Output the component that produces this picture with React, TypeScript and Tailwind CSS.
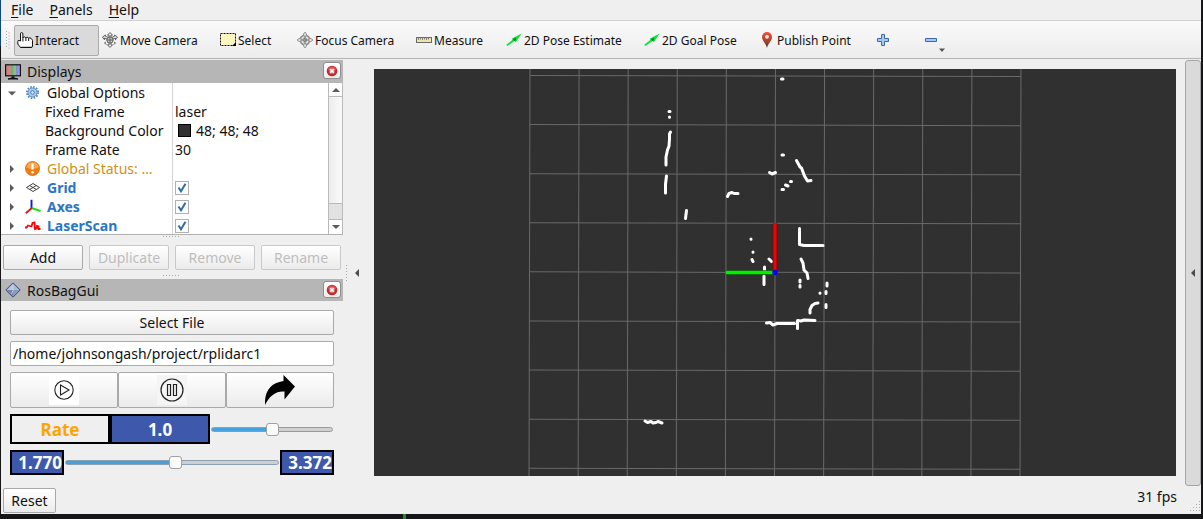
import React, { useState } from "react";

const HandIcon = () => (
  <svg viewBox="0 0 16 16" className="size-4 shrink-0">
    <path d="M3.500 9V1.800q0-1.200 1.200-1.200t1.200 1.200V6q.2-1 1.500-1t1.500 1q.2-.7 1.400-.7t1.400 1q.2-.6 1.400-.4t1.400 1.300q1 .1 1 1.300V14q0 1.500-1.500 1.500H3.500L.800 12V9.200q.2-1 1.200-.8z" fill="#fff" stroke="#111" />
    <path d="M5.900 6v3.500M8.900 6v3M11.700 6.300v2.700" stroke="#111" fill="none" />
    <path d="M3.500 15.300h11" stroke="#111" />
  </svg>
);

const MoveIcon = () => (
  <svg viewBox="0 0 16 16" className="size-4 shrink-0" fill="none" stroke="#555" strokeWidth="0.900">
    <path d="M8 .6 10.500 3H9v2.500h-2V3H5.500zM8 15.400 10.500 13H9v-2.500h-2V13H5.500zM.5 5 3.500 3v1.300l3 1.200-1 1.700-3-1.200V7.800zM15.500 5l-3-2v1.300l-3 1.200 1 1.700 3-1.200V7.800z" fill="#eee" />
    <circle cx="8" cy="8" r="3.200" fill="#ccc" />
    <path d="M8 4.800v6.400M4.800 8h6.400M4 10l-1.500 1 2 1.500M12 10l1.500 1-2 1.500" />
  </svg>
);

const SelectIcon = () => (
  <svg viewBox="0 0 16 14" className="h-3.5 w-4 shrink-0">
    <rect x=".5" y=".5" width="15" height="12" fill="#fdf6c0" stroke="#111" strokeDasharray="2 1" />
    <path d="M16 9v4h-4z" fill="#000" />
  </svg>
);

const FocusIcon = () => (
  <svg viewBox="0 0 16 16" className="size-4 shrink-0" fill="none" stroke="#888">
    <circle cx="8" cy="8" r="4.700" fill="#ddd" strokeWidth="1.600" />
    <circle cx="8" cy="8" r="1.800" />
    <path d="M8 4v8M4 8h8" stroke="#777" />
    <path d="M8 0 9.500 2v2h-3V2zM8 16l1.500-2v-2h-3v2zM0 8l2-1.500h2v3H2zM16 8l-2-1.500h-2v3h2z" fill="#ddd" strokeWidth="0.800" />
  </svg>
);

const MeasureIcon = () => (
  <svg viewBox="0 0 16 6" className="h-1.5 w-4 shrink-0">
    <rect x=".5" y=".5" width="15" height="5" fill="#efe3b0" stroke="#6a6a6a" />
    <path d="M2.500 1v2M4.500 1v1.500M6.500 1v2M8.500 1v1.500M10.500 1v2M12.500 1v1.500" stroke="#555" strokeWidth=".7" />
  </svg>
);

const PoseIcon = () => (
  <svg viewBox="0 0 16 14" className="h-3.5 w-4 shrink-0">
    <path d="M.3 11.800 6.600 6.800 5.600 5.700 15.600.5 9.800 9.200 8.600 8 1.300 13z" fill="#0be53a" />
    <path d="M6.800 6.800 9.600 4.600l.6 2.200L8.800 8z" fill="#087c2a" />
  </svg>
);

const PinIcon = () => (
  <svg viewBox="0 0 16 16" className="size-4 shrink-0">
    <defs>
      <linearGradient id="pin" x1="0" y1="0" x2="0" y2="1">
        <stop offset="0" stopColor="#e8533a" />
        <stop offset=".6" stopColor="#a8402a" />
        <stop offset="1" stopColor="#333" />
      </linearGradient>
    </defs>
    <path d="M8 0a5 5 0 0 1 5 5c0 4-4 6-5 11C7 11 3 9 3 5a5 5 0 0 1 5-5z" fill="url(#pin)" />
    <circle cx="8" cy="4.800" r="1.900" fill="#fbe9e4" />
  </svg>
);

const PlusIcon = () => (
  <svg viewBox="0 0 12 12" className="size-3">
    <path d="M4.500.5h3v4h4v3h-4v4h-3v-4h-4v-3h4z" fill="#a9c6e8" stroke="#3a6cab" />
  </svg>
);

const MinusIcon = () => (
  <svg viewBox="0 0 12 4" className="h-1 w-3">
    <path d="M.5.5h11v3H.5z" fill="#a9c6e8" stroke="#3a6cab" />
  </svg>
);

const tools = [
  { label: "Interact", icon: <HandIcon />, width: "w-[85px]" },
  { label: "Move Camera", icon: <MoveIcon />, width: "w-[118px]" },
  { label: "Select", icon: <SelectIcon />, width: "w-[77px]" },
  { label: "Focus Camera", icon: <FocusIcon />, width: "w-[119px]" },
  { label: "Measure", icon: <MeasureIcon />, width: "w-[90px]" },
  { label: "2D Pose Estimate", icon: <PoseIcon />, width: "w-[138px]" },
  { label: "2D Goal Pose", icon: <PoseIcon />, width: "w-[115px]" },
  { label: "Publish Point", icon: <PinIcon />, width: "w-[114px]" },
];

function Toolbar() {
  const [active, setActive] = useState("Interact");
  return (
    <div className="flex h-[38px] shrink-0 items-center border-b border-[#b4b4b4] bg-linear-to-b from-[#fafafa] to-[#ececec] pt-px pl-1 text-[12px]">
      <svg viewBox="0 0 5 18" className="mr-1 h-[18px] w-[5px]">
        <path d="M1.500 0v18M4 1.500v16" stroke="#aaa" strokeDasharray="1 2" />
      </svg>
      {tools.map((t) => {
        const on = t.label === active;
        return (
          <button
            key={t.label}
            onClick={() => setActive(t.label)}
            className={`flex h-[31px] shrink-0 items-center gap-0.5 rounded-xs border pl-0.5 whitespace-nowrap ${t.width} ${on ? "border-[#ababab] bg-[#dadada]" : "border-transparent"}`}
          >
            {t.icon}
            {t.label}
          </button>
        );
      })}
      <button aria-label="Add tool" className="ml-[5px] flex w-4 justify-center"><PlusIcon /></button>
      <button aria-label="Remove tool" className="relative ml-8 flex h-6 w-4 items-center justify-center">
        <MinusIcon />
        <svg viewBox="0 0 6 4" className="absolute -right-1.5 bottom-0 h-1 w-1.5"><path d="M0 .5h6L3 4z" fill="#555" /></svg>
      </button>
    </div>
  );
}

const MonitorIcon = () => (
  <svg viewBox="0 0 16 16" className="size-4">
    <defs>
      <linearGradient id="screen">
        <stop offset="0" stopColor="#d87878" />
        <stop offset=".3" stopColor="#c88a8a" />
        <stop offset=".45" stopColor="#6fae6f" />
        <stop offset=".65" stopColor="#93c393" />
        <stop offset=".75" stopColor="#8585cf" />
        <stop offset="1" stopColor="#a9a9ee" />
      </linearGradient>
    </defs>
    <rect x=".6" y=".8" width="14.800" height="11" fill="url(#screen)" stroke="#111" strokeWidth="1.200" />
    <path d="M6.500 12h3v2h-3z" fill="#333" />
    <path d="M3 15q5-2.500 10 0z" fill="#111" stroke="#111" />
  </svg>
);

const DiamondIcon = () => (
  <svg viewBox="0 0 16 16" className="size-4">
    <path d="M8 .8 15.200 8 8 15.200.8 8z" fill="#8a9cc0" stroke="#454f78" />
    <path d="M8 1.800 14 8 8 8z" fill="#a9b9d6" />
    <path d="M8 1.800V8L2 8z" fill="#b9c7df" />
    <path d="M2 8l6 6V8z" fill="#7084ae" />
    <path d="M8 3.500v5L6.500 12" stroke="#dbe3f0" strokeWidth=".7" fill="none" />
  </svg>
);

function DockTitle({ title, icon, height }: { title: string; icon: React.ReactNode; height: string }) {
  return (
    <div className={`flex shrink-0 items-center gap-1.5 bg-[#b6b6b6] pr-0.5 pl-1 ${height}`}>
      {icon}
      <h2 className="flex-1">{title}</h2>
      <button aria-label={`Close ${title}`} className="mt-[2px] flex h-[17px] w-[18px] items-center justify-center self-start rounded-[3px] border border-[#8f8f8f] bg-linear-to-b from-white to-[#eee]">
        <svg viewBox="0 0 12 12" className="size-3">
          <circle cx="6" cy="6" r="5.300" fill="#c8282c" />
          <path d="M1.500 5a4.600 4.600 0 0 1 9 0z" fill="#d8484c" />
          <rect x="3.500" y="3.500" width="5" height="5" rx="1" fill="#eaa5a6" />
          <path d="m4.300 4.300 3.400 3.400M7.700 4.300 4.300 7.700" stroke="#fff" strokeWidth="1.200" />
        </svg>
      </button>
    </div>
  );
}

const GearIcon = () => (
  <svg viewBox="0 0 16 16" className="size-4">
    <circle cx="7.500" cy="7.500" r="5.600" fill="none" stroke="#4a7fc0" strokeWidth="1.800" strokeDasharray="1.500 1.430" />
    <circle cx="7.500" cy="7.500" r="4.500" fill="#a9c8ea" stroke="#5f8fcb" />
    <circle cx="7.500" cy="7.500" r="1.800" fill="#d9e8f7" stroke="#4a7fc0" />
  </svg>
);

const WarnIcon = () => (
  <svg viewBox="0 0 16 16" className="size-4">
    <circle cx="7.500" cy="7.500" r="7" fill="#f07d12" stroke="#c9630a" strokeWidth=".8" />
    <path d="M1.200 6.500a6.400 6.400 0 0 1 12.600 0q-6.300 2.500-12.600 0z" fill="#f9a64e" />
    <path d="M7.500 2.500v6" stroke="#fff" strokeWidth="2.200" />
    <circle cx="7.500" cy="11.200" r="1.300" fill="#fff" />
  </svg>
);

const GridIcon = () => (
  <svg viewBox="0 0 16 16" className="size-4" fill="none" stroke="#444">
    <path d="M8 3.500 14.500 7.500 8 11.500 1.500 7.500zM4.700 5.500l6.600 4M11.300 5.500l-6.600 4" />
  </svg>
);

const AxesIcon = () => (
  <svg viewBox="0 0 16 16" className="size-4" fill="none" strokeWidth="1.900">
    <path d="M6.500 9.500V.8" stroke="#1414e6" />
    <path d="M6.500 9 15.500 12" stroke="#14e614" />
    <path d="M6.800 9 .8 14.200" stroke="#e61414" />
  </svg>
);

const ScanIcon = () => (
  <svg viewBox="0 0 16 16" className="size-4" fill="none" stroke="#f40808" strokeWidth="1.800">
    <path d="M0 9.500h1.500L3 7.500l3.500 1L7.500 5l2-.5.500 6.500 1.500-.5.500-2.500 1.500.5V11h2" />
  </svg>
);

type Row = { name: string; icon?: React.ReactNode; arrow?: "open" | "closed"; value?: React.ReactNode; style?: string; check?: boolean };

const rows: Row[] = [
  { name: "Global Options", icon: <GearIcon />, arrow: "open" },
  { name: "Fixed Frame", value: "laser" },
  {
    name: "Background Color",
    value: (
      <>
        <span className="mr-[5px] ml-[3px] inline-block size-[13px] border border-black bg-[#303030]" />
        48; 48; 48
      </>
    ),
  },
  { name: "Frame Rate", value: "30" },
  { name: "Global Status: …", icon: <WarnIcon />, arrow: "closed", style: "text-[#cf9018]" },
  { name: "Grid", icon: <GridIcon />, arrow: "closed", style: "font-bold text-[#2a76c6]", check: true },
  { name: "Axes", icon: <AxesIcon />, arrow: "closed", style: "font-bold text-[#2a76c6]", check: true },
  { name: "LaserScan", icon: <ScanIcon />, arrow: "closed", style: "font-bold text-[#2a76c6]", check: true },
];

function TreeRow({ row }: { row: Row }) {
  return (
    <div role="treeitem" className="grid h-[19px] grid-cols-[172px_1fr]">
      <div className="flex items-center border-r border-[#d4d4d4] pl-[7px]">
        {row.arrow && (
          <svg viewBox="0 0 8 8" className="mr-[9px] size-2">
            <path d={row.arrow === "open" ? "M0 2.500h8L4 6.500z" : "M2 0v8l4-4z"} fill="#5a5a5a" />
          </svg>
        )}
        {row.icon}
        <span className={`whitespace-nowrap ${row.icon ? "ml-1.5" : "ml-[37px]"} ${row.style ?? ""}`}>{row.name}</span>
      </div>
      <div className="flex items-center pl-0.5 whitespace-nowrap">
        {row.value}
        {row.check && (
          <label className="grid size-3.5 place-items-center">
            <input type="checkbox" defaultChecked aria-label={row.name} className="peer col-start-1 row-start-1 size-3.5 appearance-none border border-[#b0b0b0] bg-white" />
            <svg viewBox="0 0 10 10" className="invisible col-start-1 row-start-1 size-2.5 peer-checked:visible">
              <path d="M1.500 4.500 4 8.300 8.500.8" fill="none" stroke="#2e6dac" strokeWidth="2" />
            </svg>
          </label>
        )}
      </div>
    </div>
  );
}

const Dots = () => (
  <svg viewBox="0 0 18 2" className="mx-auto block h-0.5 w-[18px]"><path d="M0 .5h18" stroke="#aaa" strokeDasharray="1 2" /></svg>
);

const btn = "rounded-xs border border-[#a9a9a9] bg-linear-to-b from-white to-[#ebebeb]";

function DisplaysDock() {
  return (
    <section>
      <DockTitle title="Displays" icon={<MonitorIcon />} height="h-[23px]" />
      <div className="flex h-[152px] border-b border-[#b0b0b0] bg-white">
        <div role="tree" className="flex-1 overflow-hidden">
          {rows.map((r) => <TreeRow key={r.name} row={r} />)}
        </div>
        <div className="flex w-[15px] flex-col border-x border-[#bababa] bg-linear-to-r from-[#ececec] to-[#fafafa]">
          <div className="flex h-3.5 items-center justify-center border-b border-[#bababa] bg-white">
            <svg viewBox="0 0 8 4" className="h-1 w-2"><path d="M0 4h8L4 0z" fill="#5a5a5a" /></svg>
          </div>
          <div className="flex-1" />
          <div className="h-[17px] border-y border-[#bababa] bg-[#e2e2e2]" />
          <div className="flex h-3.5 items-center justify-center bg-white">
            <svg viewBox="0 0 8 4" className="h-1 w-2"><path d="M0 0h8L4 4z" fill="#5a5a5a" /></svg>
          </div>
        </div>
      </div>
      <div className="pt-px"><Dots /></div>
      <div className="grid grid-cols-4 gap-1.5 px-0.5 pt-[7px]">
        {["Add", "Duplicate", "Remove", "Rename"].map((b) => (
          <button key={b} disabled={b !== "Add"} className={`h-[25px] leading-none ${btn} disabled:border-[#c9c9c9] disabled:text-[#bebebe]`}>{b}</button>
        ))}
      </div>
      <div className="pt-[5px] pb-0.5"><Dots /></div>
    </section>
  );
}

function Slider({ label, initial }: { label: string; initial: number }) {
  const [v, setV] = useState(initial);
  return (
    <div className="flex min-w-0 flex-1 items-center px-px">
      <input
        type="range"
        aria-label={label}
        value={v}
        onChange={(e) => setV(Number(e.target.value))}
        style={{ backgroundImage: `linear-gradient(to right, #43a1e0 ${v}%, #cfcfcf ${v}%)` }}
        className="h-[5px] w-full appearance-none rounded-full border border-[#8aa0b0] [&::-webkit-slider-thumb]:size-[13px] [&::-webkit-slider-thumb]:appearance-none [&::-webkit-slider-thumb]:rounded-[3px] [&::-webkit-slider-thumb]:border [&::-webkit-slider-thumb]:border-[#a0a0a0] [&::-webkit-slider-thumb]:bg-[#fafafa]"
      />
    </div>
  );
}

function BagDock() {
  return (
    <section>
      <DockTitle title="RosBagGui" icon={<DiamondIcon />} height="h-[22px]" />
      <div className="flex flex-col gap-1.5 px-[9px] pt-[9px]">
        <button className={`h-[25px] leading-none ${btn}`}>Select File</button>
        <input aria-label="Bag path" defaultValue="/home/johnsongash/project/rplidarc1" className="h-[25px] rounded-xs border border-[#a9a9a9] bg-white px-0.5" />
        <div className="grid h-9 grid-cols-3">
          <button aria-label="Play" className={`flex items-center justify-center ${btn}`}>
            <svg viewBox="0 0 30 30" className="size-[30px] bg-white" fill="none" stroke="#222" strokeWidth="1.100">
              <circle cx="15" cy="15" r="9.200" /><path d="M11.500 10v10l8.500-5z" />
            </svg>
          </button>
          <button aria-label="Pause" className={`flex items-center justify-center ${btn}`}>
            <svg viewBox="0 0 30 30" className="size-[30px] bg-[#f5f5f5]" fill="none" stroke="#222" strokeWidth="1.200">
              <circle cx="15" cy="15" r="11" /><path d="M10.500 9.500h3v11h-3zM16.500 9.500h3v11h-3z" />
            </svg>
          </button>
          <button aria-label="Jump" className={`flex items-center justify-center ${btn}`}>
            <svg viewBox="0 0 30 30" className="size-[30px]"><path d="M18.500 0 30 11.500 19.500 24.500v-8Q7 15.500 0 30-1 9 18.500 6z" fill="#000" /></svg>
          </button>
        </div>
        <div className="flex h-[30px] text-[17px] leading-none font-bold">
          <span className="flex w-[100px] items-center justify-center border-2 border-black text-[#ffa500]">Rate</span>
          <output className="flex w-[100px] items-center justify-center border-2 border-black bg-[#3e59ab] text-white">1.0</output>
          <Slider label="Rate" initial={50} />
        </div>
        <div className="flex h-[25px] text-[17px] leading-none font-bold text-white">
          <output className="flex w-[54px] items-center justify-end border-2 border-black bg-[#3e59ab]">1.770</output>
          <Slider label="Position" initial={52} />
          <output className="flex w-[54px] items-center justify-end border-2 border-black bg-[#3e59ab]">3.372</output>
        </div>
      </div>
    </section>
  );
}

const verticals = [-5, -4, -3, -2, -1, 0, 1, 2, 3, 4, 5].map((k) => 775 + k * 49.1);
const horizontals = [-4, -3, -2, -1, 0, 1, 2, 3, 4].map((k) => 272.4 + k * 49.1);

const scans = [
  "M669 111.500h1M669.500 117v.2", "M670.500 132 669.500 134 669.500 139 669 146 667.500 150 666 157 666 165", "M666.500 176 665.500 184 665.500 193",
  "M686.500 210.500 685.500 218.500", "M727.500 196.500 729 193.500 732 192.500 734 193.500 738 193.500", "M769.500 172.500 772 174 775.500 172.500",
  "M781.500 79h1.500M782 155h1.500M782 189.500h1.500M785.500 185l2.500 1M790.500 181.500h1",
  "M796.500 160.500 800 167 801.500 168 804.500 176 807.500 181 811 180.500",
  "M799.500 228.500v16L804 245.500H823", "M751 239v.2M753 252v.2M752 259.500l1 2M769 259l2.500 2.500M764.500 267v3M764 276v8.500",
  "M801 259 803 263 804 270 807 273 808 278.500", "M800 280v2M800 285.500v1.500M827 283v3M826 291.500v2M826 304.500v3M820 293v.2",
  "M810 313 810 309.500 812 305.500 815 303.500 818 303", "M766.500 323 770 322.500 773 325 777 323.500H794.500", "M797.500 328.500V320.500L801 321 804 320 815 320.500",
  "M645 421 647.500 422.500 651 421.500 653 423 656 422.500 658 421.500 662 423",
];

function SceneView() {
  return (
    <div className="min-h-0 flex-1 bg-[#303030]">
      <svg viewBox="374 69 802 407" className="size-full" role="img" aria-label="Laser scan view">
        <g stroke="#696969" strokeWidth="1" transform="rotate(.13 775 272.400)">
          {verticals.map((x) => <line key={x} x1={x} x2={x} y1="60" y2="486" />)}
          {horizontals.map((y) => <line key={y} x1="529.500" x2="1020.500" y1={y} y2={y} />)}
        </g>
        <g fill="none" stroke="#fff" strokeWidth="3" strokeLinecap="round" strokeLinejoin="round">
          {scans.map((d) => <path key={d} d={d} />)}
        </g>
        <path d="M726 272.500h49" stroke="#0a7a0a" strokeWidth="4.600" />
        <path d="M726 272.500h49" stroke="#00f000" strokeWidth="3" />
        <path d="M775 223.500v49" stroke="#7a0808" strokeWidth="4.600" />
        <path d="M775 223.500v49" stroke="#f80000" strokeWidth="3" />
        <circle cx="775" cy="272.500" r="2.700" fill="#0000f4" />
      </svg>
    </div>
  );
}

const LeftArrow = () => (
  <svg viewBox="0 0 4 8" className="h-2 w-1"><path d="M4 0v8L0 4z" fill="#4c4c4c" /></svg>
);

export default function App() {
  return (
    <div className="flex min-h-screen flex-col bg-[#161618] font-['Noto_Sans',sans-serif] text-[14px] leading-[19px] text-[#111]">
      <div className="flex flex-1 pr-0.5">
        <div className="flex w-px flex-col"><div className="h-[46px] bg-[#0d4a80]" /></div>
        <div className="flex min-w-0 flex-1 flex-col bg-[#efefef]">
          <nav className="flex h-[21px] shrink-0 gap-4 border-b border-[#d2d2d2] pl-2.5">
            {["File", "Panels", "Help"].map((m) => (
              <button key={m} className="leading-none"><span className="underline underline-offset-2">{m[0]}</span>{m.slice(1)}</button>
            ))}
          </nav>
          <Toolbar />
          <main className="flex min-h-0 flex-1">
            <div className="w-[342px] shrink-0 pt-px">
              <DisplaysDock />
              <BagDock />
            </div>
            <div className="flex w-[31px] shrink-0 items-center gap-2 pl-[3px]">
              <svg viewBox="0 0 1 16" className="h-4 w-px"><path d="M.5 0v16" stroke="#aaa" strokeDasharray="1 2" /></svg>
              <LeftArrow />
            </div>
            <div className="flex min-w-0 flex-1 flex-col py-2.5">
              <SceneView />
            </div>
            <button aria-label="Show right panel" className="mt-px ml-[9px] flex w-4 shrink-0 items-center justify-center rounded-[3px] border border-[#a6a6a6] bg-[#dadada]">
              <LeftArrow />
            </button>
          </main>
          <footer className="flex h-7 shrink-0 items-start justify-between pl-0.5">
            <button className={`mt-0.5 h-[25px] w-[53px] leading-none ${btn}`}>Reset</button>
            <div className="flex gap-3">
              <span className="pt-px">31 fps</span>
              <svg viewBox="0 0 12 12" className="mt-3.5 size-3"><path d="M10.500 1v11M7.500 4v8M4.500 7v5M1.500 10v2" stroke="#aaa" strokeDasharray="1 2" /></svg>
            </div>
          </footer>
        </div>
      </div>
      <div className="h-[5px] shrink-0 pl-[403px]"><div className="h-full w-[3px] bg-[#238636]" /></div>
    </div>
  );
}
